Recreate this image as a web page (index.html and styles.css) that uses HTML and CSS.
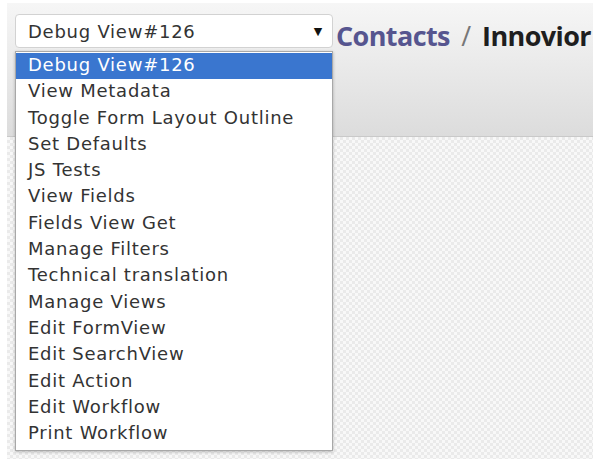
FILE: index.html
```html
<!DOCTYPE html>
<html lang="en">
<head>
<meta charset="utf-8">
<title>Contacts / Innovior</title>
<link rel="stylesheet" href="styles.css">
</head>
<body>
<div class="page">
  <header class="view-header">
    <div class="debug-select">
      <div class="select-box">
        <span class="select-value">Debug View#126</span>
        <span class="select-arrow">&#9660;</span>
      </div>
      <ul class="select-list">
        <li class="option selected">Debug View#126</li>
        <li class="option">View Metadata</li>
        <li class="option">Toggle Form Layout Outline</li>
        <li class="option">Set Defaults</li>
        <li class="option">JS Tests</li>
        <li class="option">View Fields</li>
        <li class="option">Fields View Get</li>
        <li class="option">Manage Filters</li>
        <li class="option">Technical translation</li>
        <li class="option">Manage Views</li>
        <li class="option">Edit FormView</li>
        <li class="option">Edit SearchView</li>
        <li class="option">Edit Action</li>
        <li class="option">Edit Workflow</li>
        <li class="option">Print Workflow</li>
      </ul>
    </div>
    <h2 class="view-title"><a class="crumb">Contacts</a> <span class="sep">/</span> <span class="current">Innovior</span></h2>
  </header>
  <main class="sheet-bg"></main>
</div>
</body>
</html>
```

FILE: styles.css
```css
html, body {
  margin: 0;
  padding: 0;
  background: #ffffff;
  height: 100%;
  overflow: hidden;
}

.page {
  display: flex;
  flex-direction: column;
  height: 100%;
  padding: 3px 0 0 7px;
  box-sizing: border-box;
}

.view-header {
  display: flex;
  align-items: flex-start;
  height: 134px;
  border-bottom: 1px solid #c9c9c9;
  background: linear-gradient(#f6f6f6, #dcdcdc);
  padding: 11px 0 0 8px;
  box-sizing: border-box;
  white-space: nowrap;
}

.debug-select {
  position: relative;
  flex: none;
  width: 318px;
  font-family: "DejaVu Sans", sans-serif;
  font-size: 18px;
  letter-spacing: 0.75px;
  color: #333333;
}

.select-box {
  display: flex;
  align-items: center;
  justify-content: space-between;
  height: 34px;
  box-sizing: border-box;
  padding: 0 9px 0 12px;
  background: #ffffff;
  border: 1px solid #d2d2d2;
  border-radius: 4px;
}

.select-arrow {
  font-size: 11px;
  color: #111111;
}

.select-list {
  position: absolute;
  top: 37px;
  left: 0;
  width: 318px;
  box-sizing: border-box;
  margin: 0;
  padding: 1px 0 3px;
  list-style: none;
  background: #ffffff;
  border: 1px solid #a8a8a8;
  box-shadow: 0 1px 3px rgba(0, 0, 0, 0.25);
  z-index: 2;
}

.option {
  height: 26.3px;
  line-height: 24px;
  padding-left: 12px;
}

.option.selected {
  background: #3a76cf;
  color: #ffffff;
}

.view-title {
  margin: 6px 0 0 3px;
  font-family: "Open Sans", sans-serif;
  font-weight: 700;
  font-size: 27px;
  letter-spacing: -0.6px;
  word-spacing: 5px;
  line-height: 32px;
  color: #1e1e1e;
}

.crumb {
  color: #56558f;
}

.sep {
  font-weight: 400;
  color: #777777;
}

.sheet-bg {
  flex: 1;
  background-color: #f6f6f6;
  background-image: repeating-conic-gradient(#eaeaea 0 25%, #f8f8f8 0 50%);
  background-size: 6px 6px;
}
```
